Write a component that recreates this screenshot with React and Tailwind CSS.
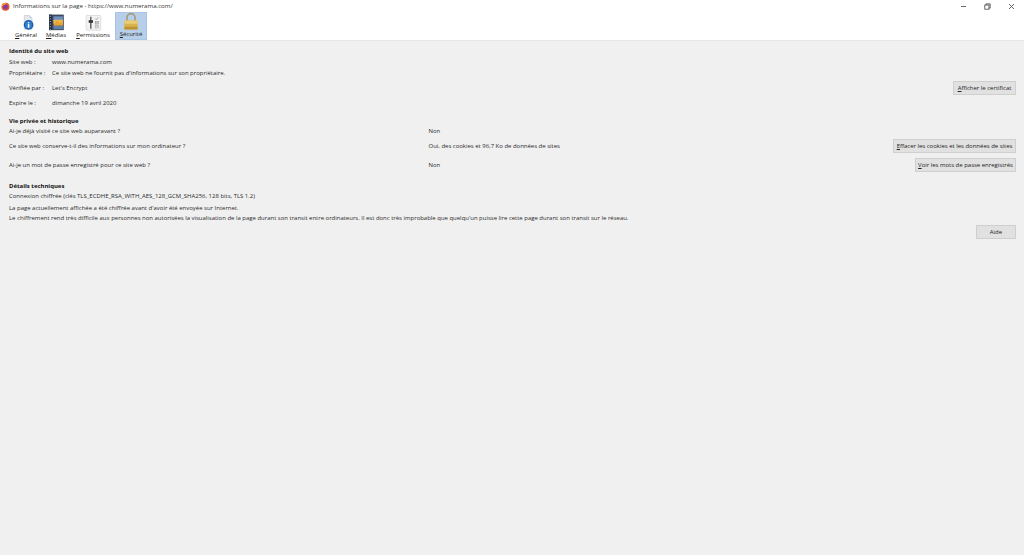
const font = { fontFamily: '"Open Sans", "Noto Sans", sans-serif' }

function InfoIcon() {
  return (
    <svg width="22" height="22" viewBox="0 0 22 22">
      <path d="M9 4h6l3 3v13H9z" fill="#e4e9ef" stroke="#b4bcc6" strokeWidth="0.6" />
      <path d="M15 4v3h3" fill="#c4ced9" />
      <circle cx="14" cy="15" r="5.6" fill="#1c5aa8" />
      <circle cx="14" cy="15" r="4.2" fill="#2f7fd0" />
      <circle cx="14" cy="12.4" r="0.9" fill="#fff" />
      <rect x="13.1" y="14" width="1.8" height="4.2" fill="#fff" />
    </svg>
  )
}

function MediaIcon() {
  return (
    <svg width="22" height="22" viewBox="-1 -2 22 22">
      <rect x="2" y="1" width="17" height="18" fill="#39475c" />
      <rect x="2" y="1" width="3" height="18" fill="#1f2a3a" />
      <rect x="7" y="3" width="11" height="6" fill="#6d8fc0" />
      <rect x="7" y="7" width="11" height="5" fill="#efb64a" />
      <path d="M7 13l4-5 4 3 3-2v5H7z" fill="#e8a232" />
      <rect x="7" y="14" width="11" height="4" fill="#5f7fa8" />
      <path d="M2.8 3h1.2M2.8 6h1.2M2.8 9h1.2M2.8 12h1.2M2.8 15h1.2M2.8 18h1.2" stroke="#d8dee6" strokeWidth="1" />
    </svg>
  )
}

function PermIcon() {
  return (
    <svg width="22" height="22" viewBox="0 0 22 22">
      <rect x="3" y="4" width="17" height="17" rx="1" fill="#f3f3f3" stroke="#cfcfcf" strokeWidth="0.7" />
      <path d="M8.5 5.5v14" stroke="#333" strokeWidth="1.3" />
      <rect x="6" y="9.5" width="5" height="3" fill="#333" />
      <path d="M13.5 7.5l1.3 1.3 2.2-2.6" stroke="#8a8a8a" strokeWidth="0.9" fill="none" />
      <rect x="13.5" y="11" width="4" height="3" fill="#c8c8c8" stroke="#8a8a8a" strokeWidth="0.5" />
      <rect x="13.5" y="15.5" width="4" height="3" fill="#dcdcdc" stroke="#9a9a9a" strokeWidth="0.5" />
    </svg>
  )
}

function LockIcon() {
  return (
    <svg width="18" height="19" viewBox="0 0 18 19">
      <path d="M4.5 9V5.2a4.5 4.5 0 0 1 9 0V9" fill="none" stroke="#a39a78" strokeWidth="1.8" />
      <rect x="1.5" y="8.5" width="15" height="10" rx="1.5" fill="#d8b24c" />
      <rect x="1.5" y="8.5" width="15" height="3.5" rx="1.5" fill="#e9cd76" />
      <rect x="1.5" y="15.5" width="15" height="3" rx="1" fill="#bd9433" />
    </svg>
  )
}

function Tab({ icon, ul, rest, className }) {
  return (
    <div className={`flex flex-col items-center justify-end h-[28px] ${className}`}>
      {icon}
      <span className="leading-[9px] text-[#222] whitespace-nowrap"><u>{ul}</u>{rest}</span>
    </div>
  )
}

function Btn({ children, className }) {
  return (
    <div className={`h-[14px] flex items-center justify-center bg-[#e1e1e1] border border-[#cfcfcf] text-[#222] whitespace-nowrap ${className}`}>
      {children}
    </div>
  )
}

function Info({ label, value, className }) {
  return (
    <div className={`flex items-center ${className}`}>
      <span className="w-[43px] shrink-0">{label}</span>
      <span>{value}</span>
    </div>
  )
}

export default function App() {
  return (
    <div className="w-[1024px] h-[555px] overflow-hidden flex flex-col bg-[#f0f0f0] text-[5.97px] text-[#2a2a2a]" style={font}>
      <div className="bg-white h-[41px] shrink-0 border-b border-[#e6e6e6]">
        <div className="h-[12px] flex items-center pl-[1px] pr-[9px]">
          <svg width="9" height="9" viewBox="0 0 10 10" className="shrink-0">
            <circle cx="5" cy="5.3" r="4.4" fill="#e8512f" />
            <circle cx="5" cy="5.5" r="2.6" fill="#7a3f9e" />
            <path d="M1 3.5C2 1 5 .5 6.5 1.5 5 1.8 4.5 2.5 4.5 3 3 3 2 3.5 1 5z" fill="#f9a72b" />
          </svg>
          <span className="ml-[3px] text-[6.15px] text-[#333] leading-none">Informations sur la page - https://www.numerama.com/</span>
          <div className="ml-auto flex items-center gap-[17px]">
            <svg width="7" height="7" viewBox="0 0 7 7"><path d="M1 3.5h5" stroke="#444" strokeWidth="0.8" /></svg>
            <svg width="7" height="7" viewBox="0 0 7 7" fill="none" stroke="#444" strokeWidth="0.8"><rect x="0.8" y="2" width="4.2" height="4.2" /><path d="M2 2V0.9h4.2v4.2H5" /></svg>
            <svg width="7" height="7" viewBox="0 0 7 7"><path d="M1 1l5 5M6 1L1 6" stroke="#444" strokeWidth="0.8" /></svg>
          </div>
        </div>
        <div className="flex items-end pl-[14px] h-[28px]">
          <Tab className="w-[24px]" icon={<InfoIcon />} ul="G" rest="énéral" />
          <Tab className="w-[24px] ml-[6px]" icon={<MediaIcon />} ul="M" rest="édias" />
          <Tab className="w-[36px] ml-[7px]" icon={<PermIcon />} ul="P" rest="ermissions" />
          <Tab className="w-[32px] ml-[4px] bg-[#b8cfe9] border border-[#a9c4e4]" icon={<LockIcon />} ul="S" rest="écurité" />
        </div>
      </div>

      <div className="flex flex-col pl-[9px] pr-[8px] pt-[5px]">
        <div className="h-[10px] flex items-center font-bold text-[#111]">Identité du site web</div>
        <Info className="h-[11px] mt-[1px]" label="Site web :" value="www.numerama.com" />
        <Info className="h-[11px]" label="Propriétaire :" value="Ce site web ne fournit pas d'informations sur son propriétaire." />
        <div className="h-[14px] mt-[2px] flex items-center justify-between">
          <Info label="Vérifiée par :" value="Let's Encrypt" />
          <Btn className="w-[63px]"><u>A</u>fficher le certificat</Btn>
        </div>
        <Info className="h-[11px] mt-[3px]" label="Expire le :" value="dimanche 19 avril 2020" />

        <div className="h-[10px] mt-[7px] flex items-center font-bold text-[#111]">Vie privée et historique</div>
        <div className="h-[10px] flex items-center">
          <span className="w-[419.5px] shrink-0">Ai-je déjà visité ce site web auparavant ?</span>
          <span>Non</span>
        </div>
        <div className="h-[14px] mt-[3px] flex items-center">
          <span className="w-[419.5px] shrink-0">Ce site web conserve-t-il des informations sur mon ordinateur ?</span>
          <span>Oui, des cookies et 96,7 Ko de données de sites</span>
          <Btn className="w-[123px] ml-auto"><u>E</u>ffacer les cookies et les données de sites</Btn>
        </div>
        <div className="h-[14px] mt-[5px] flex items-center">
          <span className="w-[419.5px] shrink-0">Ai-je un mot de passe enregistré pour ce site web ?</span>
          <span>Non</span>
          <Btn className="w-[101px] ml-auto"><u>V</u>oir les mots de passe enregistrés</Btn>
        </div>

        <div className="h-[10px] mt-[9px] flex items-center font-bold text-[#111]">Détails techniques</div>
        <div className="h-[10px] flex items-center">Connexion chiffrée (clés TLS_ECDHE_RSA_WITH_AES_128_GCM_SHA256, 128 bits, TLS 1.2)</div>
        <div className="h-[10px] mt-[2px] flex items-center">La page actuellement affichée a été chiffrée avant d'avoir été envoyée sur Internet.</div>
        <div className="h-[10px] flex items-center">Le chiffrement rend très difficile aux personnes non autorisées la visualisation de la page durant son transit entre ordinateurs. Il est donc très improbable que quelqu'un puisse lire cette page durant son transit sur le réseau.</div>
        <div className="flex justify-end mt-[2px]">
          <Btn className="w-[40px]">Aide</Btn>
        </div>
      </div>
    </div>
  )
}
